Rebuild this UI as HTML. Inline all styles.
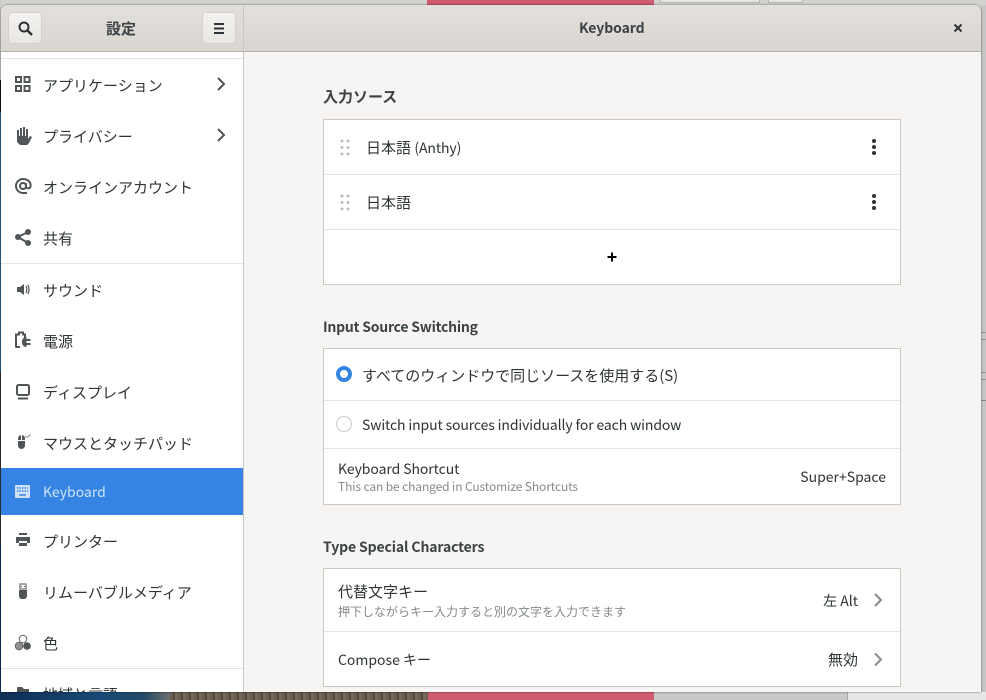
<!DOCTYPE html>
<html><head><meta charset="utf-8">
<style>
html,body{margin:0;padding:0;width:986px;height:700px;overflow:hidden;background:#d4d4d2;}
body{position:relative;font-family:"Noto Sans CJK JP","Liberation Sans",sans-serif;color:#2e3436;font-size:14px;}
div{position:absolute;box-sizing:border-box;}
.t{white-space:nowrap;line-height:20px;height:20px;}
.s{font-size:15px;left:43px;}
.h{font-weight:700;color:#3d4244;}
.b{background:#fff;border:1px solid #cdc7c2;left:323px;width:578px;}
.l{background:#e6e4e2;height:1px;}
svg{position:absolute;left:0;top:0;}
</style></head><body>
<!-- desktop background -->
<div style="left:0;top:0;width:986px;height:5px;background:#d2d2d0"></div>
<div style="left:427px;top:0;width:227px;height:5px;background:#cf5c70"></div>
<div style="left:660px;top:0;width:100px;height:3px;border:1px solid #b5b5b3;border-top:0;background:#e4e4e2"></div>
<div style="left:768px;top:0;width:35px;height:3px;border:1px solid #b5b5b3;border-top:0;background:#e4e4e2"></div>
<div style="left:0;top:0;width:1px;height:80px;background:#c9c9c7"></div>
<div style="left:0;top:80px;width:1px;height:32px;background:#111"></div>
<div style="left:0;top:112px;width:1px;height:260px;background:#2f618f"></div>
<div style="left:0;top:372px;width:1px;height:170px;background:#333"></div>
<div style="left:0;top:542px;width:1px;height:158px;background:#10305a"></div>
<div style="left:0;top:692px;width:170px;height:8px;background:linear-gradient(90deg,#0d2f55,#1a4a78 60%,#234a66 85%,#6c6f70)"></div>
<div style="left:170px;top:692px;width:258px;height:8px;background:repeating-linear-gradient(90deg,#6a5e50 0 3px,#54493e 3px 5px,#75695a 5px 8px)"></div>
<div style="left:428px;top:692px;width:226px;height:8px;background:#cf5c70"></div>
<div style="left:654px;top:692px;width:193px;height:8px;background:#c9c9c7"></div>
<div style="left:847px;top:692px;width:139px;height:8px;background:#e7e7e5;border-left:1px solid #a9a9a7"></div>
<div style="left:981px;top:5px;width:5px;height:687px;background:#c6c6c4"></div>
<div style="left:981px;top:332px;width:5px;height:1px;background:#999"></div>
<div style="left:981px;top:339px;width:5px;height:1px;background:#999"></div>
<div style="left:981px;top:372px;width:5px;height:1px;background:#999"></div>
<div style="left:981px;top:379px;width:5px;height:1px;background:#999"></div>
<div style="left:981px;top:400px;width:5px;height:1px;background:#888"></div>

<!-- window -->
<div style="left:1px;top:5px;width:980px;height:687px;background:#f6f5f4;border-radius:7px 7px 0 0;overflow:hidden;box-shadow:0 0 2px rgba(0,0,0,.55)">
 <div style="left:0;top:0;width:980px;height:47px;background:linear-gradient(#e3e0dc,#d9d6d1);border-bottom:1px solid #b6b1ab"></div>
 <div style="left:0;top:47px;width:242px;height:640px;background:#fff"></div>
 <div style="left:242px;top:0;width:1px;height:687px;background:#cbc6c1"></div>
</div>

<!-- header buttons -->
<div style="left:8px;top:12px;width:34px;height:32px;border-radius:4px;background:linear-gradient(#f3f2f0,#e9e7e4);border:1px solid #d4d0cb"></div>
<div style="left:202px;top:12px;width:34px;height:32px;border-radius:4px;background:linear-gradient(#f3f2f0,#e9e7e4);border:1px solid #d4d0cb"></div>
<div class="t h" style="left:106px;top:19px;font-size:15px">設定</div>
<div class="t h" style="left:579px;top:18px;font-size:14px;letter-spacing:-.1px">Keyboard</div>

<!-- sidebar -->
<div class="l" style="left:1px;top:58px;width:242px"></div>
<div class="l" style="left:1px;top:263px;width:242px"></div>
<div class="l" style="left:1px;top:668px;width:242px"></div>
<div style="left:1px;top:468px;width:242px;height:47px;background:#3584e4"></div>
<div class="t s" style="top:76px">アプリケーション</div>
<div class="t s" style="top:127px">プライバシー</div>
<div class="t s" style="top:178px">オンラインアカウント</div>
<div class="t s" style="top:229px">共有</div>
<div class="t s" style="top:281px">サウンド</div>
<div class="t s" style="top:332px">電源</div>
<div class="t s" style="top:383px">ディスプレイ</div>
<div class="t s" style="top:434px">マウスとタッチパッド</div>
<div class="t" style="left:43px;top:482px;color:#cfe1f8;font-size:14px">Keyboard</div>
<div class="t s" style="top:532px">プリンター</div>
<div class="t s" style="top:583px">リムーバブルメディア</div>
<div class="t s" style="top:634px">色</div>
<div style="left:43px;top:680px;width:170px;height:12px;overflow:hidden"><div class="t" style="left:0;top:5px;font-size:15px">地域と言語</div></div>

<!-- headings -->
<div class="t h" style="left:323px;top:87px;font-size:15px">入力ソース</div>
<div class="t h" style="left:323px;top:317px;font-size:14px;letter-spacing:-.23px">Input Source Switching</div>
<div class="t h" style="left:323px;top:537px;font-size:14px;letter-spacing:-.13px">Type Special Characters</div>

<!-- box 1 -->
<div class="b" style="top:119px;height:166px"></div>
<div class="l" style="left:324px;top:174px;width:576px"></div>
<div class="l" style="left:324px;top:229px;width:576px"></div>
<div class="t" style="left:366px;top:138px;font-size:15px">日本語 <span style="font-size:14px;letter-spacing:-.1px">(Anthy)</span></div>
<div class="t" style="left:366px;top:193px;font-size:15px">日本語</div>

<!-- box 2 -->
<div class="b" style="top:348px;height:157px"></div>
<div class="l" style="left:324px;top:400px;width:576px"></div>
<div class="l" style="left:324px;top:448px;width:576px"></div>
<div class="t" style="left:362px;top:366px;font-size:15px;letter-spacing:-.02px">すべてのウィンドウで同じソースを使用する(S)</div>
<div class="t" style="left:362px;top:415px;font-size:14px;letter-spacing:-.125px">Switch input sources individually for each window</div>
<div class="t" style="left:338px;top:459px;font-size:14px;letter-spacing:-.08px">Keyboard Shortcut</div>
<div class="t" style="left:338px;top:477px;font-size:12px;color:#858a8b;letter-spacing:-.12px">This can be changed in Customize Shortcuts</div>
<div class="t" style="right:100px;top:467px;font-size:14px">Super+Space</div>

<!-- box 3 -->
<div class="b" style="top:568px;height:119px"></div>
<div class="l" style="left:324px;top:631px;width:576px"></div>
<div class="t" style="left:338px;top:582px;font-size:15px">代替文字キー</div>
<div class="t" style="left:338px;top:602px;font-size:12px;color:#858a8b">押下しながらキー入力すると別の文字を入力できます</div>
<div class="t" style="right:128px;top:591px;font-size:14px;">左 Alt</div>
<div class="t" style="left:338px;top:650px;font-size:14px">Compose キー</div>
<div class="t" style="right:128px;top:650px;font-size:15px">無効</div>

<svg width="986" height="700" viewBox="0 0 986 700" fill="none">
 <!-- search -->
 <circle cx="24" cy="27" r="4.500" stroke="#2e3436" stroke-width="2"/>
 <path d="M27.500 30.500L32 35" stroke="#2e3436" stroke-width="2.400"/>
 <!-- hamburger -->
 <path d="M214 24h10M214 28.500h10M214 33h10" stroke="#2e3436" stroke-width="2"/>
 <!-- close -->
 <path d="M954.500 24.500l7 7M961.500 24.500l-7 7" stroke="#2e3436" stroke-width="2"/>
 <!-- apps grid -->
 <g stroke="#505557" stroke-width="2">
  <rect x="16" y="77" width="5" height="5"/><rect x="24.500" y="77" width="5" height="5"/>
  <rect x="16" y="86" width="5" height="5"/><rect x="24.500" y="86" width="5" height="5"/>
 </g>
 <!-- chevrons -->
 <path d="M218 78l6 6-6 6M218 129l6 6-6 6" stroke="#505557" stroke-width="2"/>
 <path d="M875 594l6 6-6 6M875 653.500l6 6-6 6" stroke="#858a8b" stroke-width="2"/>
 <!-- hand -->
 <path d="M17 130h2v6h1v-8h2v8h1v-9h2v9h1v-7h2v10l2-3 2 1-3 6-2 2h-7l-3-3z" fill="#505557"/>
 <!-- at -->
 <circle cx="23" cy="186" r="3" stroke="#505557" stroke-width="2"/>
 <path d="M26 183v4a2.500 2.500 0 0 0 4.500 0c1-5-3-8-7.500-8a7 7 0 0 0 0 14h4" stroke="#505557" stroke-width="2"/>
 <!-- share -->
 <circle cx="18" cy="237" r="3" fill="#505557"/><circle cx="28" cy="232" r="3" fill="#505557"/><circle cx="28" cy="243" r="3" fill="#505557"/>
 <path d="M18 237l10-5M18 237l10 6" stroke="#505557" stroke-width="2"/>
 <!-- sound -->
 <path d="M17 287h3l4-3v11l-4-3h-3z" fill="#505557"/>
 <path d="M26 286c1 2 1 5 0 7M28 285c1.300 3 1.300 6 0 9" stroke="#505557" stroke-width="1.200"/>
 <!-- power -->
 <path d="M20 347h-3.500a.5.500 0 0 1-.5-.5v-12h3v-2h4v2h2v4" stroke="#505557" stroke-width="2"/>
 <path d="M22 341a4.500 4.500 0 0 1 4.500-4v2h4v2h-4v2h4v2h-4v2a4.500 4.500 0 0 1-4.500-4z" fill="#505557"/>
 <!-- display -->
 <rect x="17" y="385" width="12" height="10" rx="1.500" stroke="#505557" stroke-width="2"/>
 <path d="M18 398.500h10" stroke="#505557" stroke-width="2"/>
 <!-- mouse -->
 <rect x="18" y="435" width="7" height="14" rx="3.500" fill="#505557"/>
 <path d="M18 440.500h7M21.500 435v5" stroke="#fff"/>
 <path d="M25 436c1.500 2 3 1 4 0 .5-.5 1-1 2-1" stroke="#888" stroke-width="1"/>
 <!-- keyboard -->
 <rect x="15" y="485" width="15" height="13" rx="1" fill="#cfe1f8"/>
 <path d="M17 488h11M17 491h11" stroke="#3584e4" stroke-width="1.500" stroke-dasharray="1.500 1"/>
 <path d="M19 495h7" stroke="#3584e4" stroke-width="1.500"/>
 <!-- printer -->
 <path d="M19 533h8v2h-8zM16 537h14v6h-3v-2h-8v2h-3zM19 543h8v3h-8z" fill="#505557"/>
 <!-- usb -->
 <path d="M20 584h6v5h-6z" stroke="#505557"/>
 <path d="M19 590h8v6a3 3 0 0 1-3 3h-2a3 3 0 0 1-3-3z" fill="#505557"/>
 <path d="M21.500 586v1M24.500 586v1" stroke="#505557"/>
 <!-- color -->
 <circle cx="23" cy="639" r="3.800" stroke="#666" stroke-width="1"/>
 <circle cx="19" cy="646" r="3.800" fill="#8f8f8f" stroke="#666"/>
 <circle cx="27" cy="646" r="3.800" fill="#505557"/>
 <!-- folder -->
 <path d="M17 688a1 1 0 0 1 1-1h4l2 2h5v3H17z" fill="#505557"/>
 <!-- drag handles -->
 <g fill="#bdbdbd">
  <circle cx="342" cy="141" r="1.500"/><circle cx="348" cy="141" r="1.500"/><circle cx="342" cy="147.500" r="1.500"/><circle cx="348" cy="147.500" r="1.500"/><circle cx="342" cy="154" r="1.500"/><circle cx="348" cy="154" r="1.500"/>
  <circle cx="342" cy="196" r="1.500"/><circle cx="348" cy="196" r="1.500"/><circle cx="342" cy="202.500" r="1.500"/><circle cx="348" cy="202.500" r="1.500"/><circle cx="342" cy="209" r="1.500"/><circle cx="348" cy="209" r="1.500"/>
 </g>
 <!-- kebabs -->
 <g fill="#2e3436">
  <circle cx="874" cy="141" r="2"/><circle cx="874" cy="147" r="2"/><circle cx="874" cy="153" r="2"/>
  <circle cx="874" cy="196" r="2"/><circle cx="874" cy="202" r="2"/><circle cx="874" cy="208" r="2"/>
 </g>
 <!-- plus -->
 <path d="M607.500 257h9M612 252.500v9" stroke="#000" stroke-width="2"/>
 <!-- radios -->
 <circle cx="344" cy="374" r="6" fill="#fff" stroke="#3584e4" stroke-width="4"/>
 <circle cx="344" cy="424" r="7.500" fill="#fff" stroke="#cdc7c2" stroke-width="1"/>
</svg>
</body></html>
